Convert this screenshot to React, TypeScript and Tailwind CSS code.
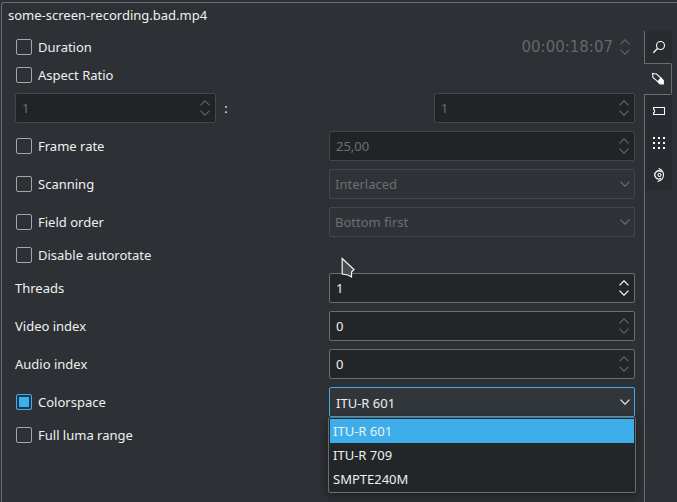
import { useState, type ReactNode } from "react";

type TabId = "file" | "edit" | "markers" | "metadata" | "analysis";

function SpinArrows({ bright = false, label }: { bright?: boolean; label: string }) {
  return (
    <span className={`flex w-5 shrink-0 flex-col items-center justify-center ${bright ? "text-[#fcfcfc]" : "text-[#5f6366]"}`}>
      <button type="button" aria-label={`Increase ${label}`} className="flex h-2.5 items-center">
        <svg width="10" height="6" viewBox="0 0 10 6" fill="none" stroke="currentColor" strokeWidth="1.2">
          <path d="M0.5 5.3 5 0.8l4.5 4.5" />
        </svg>
      </button>
      <button type="button" aria-label={`Decrease ${label}`} className="flex h-2.5 items-center">
        <svg width="10" height="6" viewBox="0 0 10 6" fill="none" stroke="currentColor" strokeWidth="1.2">
          <path d="M0.5 0.7 5 5.2 9.5 0.7" />
        </svg>
      </button>
    </span>
  );
}

function SpinBox({ label, value, disabled = false, bright = false, id }: { label: string; value: string; disabled?: boolean; bright?: boolean; id?: string }) {
  return (
    <div className={`flex h-[30px] min-w-0 rounded-[2px] border ${disabled ? "border-[#43474a] bg-[#212427]" : "border-[#6a6e71] bg-[#222629]"}`}>
      <input
        id={id}
        aria-label={id ? undefined : label}
        defaultValue={value}
        disabled={disabled}
        className={`min-w-0 flex-1 bg-transparent pl-1.5 leading-6 outline-none ${disabled ? "text-[#6b6f72]" : "text-[#eff0f1]"}`}
      />
      <SpinArrows bright={bright} label={label} />
    </div>
  );
}

function Chevron() {
  return (
    <svg className="pointer-events-none absolute top-3 right-[5px]" width="10" height="6" viewBox="0 0 10 6" fill="none" stroke="currentColor" strokeWidth="1.2">
      <path d="M0.5 0.7 5 5.2 9.5 0.7" />
    </svg>
  );
}

function DisabledSelect({ label, value }: { label: string; value: string }) {
  return (
    <div className="relative text-[#6b6f72]">
      <select disabled aria-label={label} className="block h-[30px] w-full appearance-none rounded-[2px] border border-[#43474a] bg-[#2f3337] px-[5px] opacity-100">
        <option>{value}</option>
      </select>
      <Chevron />
    </div>
  );
}

function Check({ label, defaultChecked = false }: { label: string; defaultChecked?: boolean }) {
  return (
    <label className="flex h-5 items-center gap-1.5 pl-px">
      <input
        type="checkbox"
        defaultChecked={defaultChecked}
        className="size-4 appearance-none rounded-[2px] border border-[#a4a7a9] checked:border-[#3daee9] checked:bg-[#3daee9] checked:shadow-[inset_0_0_0_2px_#20394a]"
      />
      {label}
    </label>
  );
}

function Row({ children }: { children: ReactNode }) {
  return <div className="grid grid-cols-2 items-center gap-2">{children}</div>;
}

const COLORSPACES = ["ITU-R 601", "ITU-R 709", "SMPTE240M"];

function ColorspaceSelect() {
  const [value, setValue] = useState(COLORSPACES[0]);
  return (
    <div className="relative">
      <select
        aria-label="Colorspace"
        value={value}
        onChange={(e) => setValue(e.target.value)}
        className="block h-[30px] w-full appearance-none rounded-[2px] border border-[#3daee9] bg-[#31363a] px-1.5 pt-0.5 outline-none"
      >
        {COLORSPACES.map((c) => (
          <option key={c}>{c}</option>
        ))}
      </select>
      <Chevron />
      <ul role="listbox" aria-label="Colorspace options" className="absolute -inset-x-px top-full z-10 rounded-[2px] border border-[#6a6e71] bg-[#222629] p-px shadow-[0_2px_8px_rgba(0,0,0,0.4)]">
        {COLORSPACES.map((c) => (
          <li
            key={c}
            role="option"
            aria-selected={c === value}
            onClick={() => setValue(c)}
            className={`h-6 px-[3px] ${c === value ? "bg-[#3daee9]" : ""}`}
          >
            {c}
          </li>
        ))}
      </ul>
    </div>
  );
}

const TABS: { id: TabId; label: string; icon: ReactNode }[] = [
  {
    id: "file",
    label: "File info",
    icon: (
      <g fill="none" stroke="currentColor">
        <circle cx="9.5" cy="6.5" r="4" strokeWidth="1.1" />
        <path d="M6.7 9.3 2.3 13.7" strokeWidth="1.3" />
      </g>
    ),
  },
  {
    id: "edit",
    label: "Properties",
    icon: (
      <g stroke="currentColor">
        <path d="M2.5 2.5 6.5 3 11 7 8 10.8 3 6.5Z" fill="none" strokeWidth="1.1" />
        <path d="M11 7.2 13.3 9.5v3.3H10L8 10.8Z" fill="currentColor" strokeWidth="1.2" />
      </g>
    ),
  },
  {
    id: "markers",
    label: "Markers",
    icon: <path d="M2.5 4.5h11v7h-11v-1.5l1-1v-2l-1-1Z" fill="none" stroke="currentColor" strokeWidth="1.1" />,
  },
  {
    id: "metadata",
    label: "Metadata",
    icon: <path d="M2 2h2v2H2zM7 2h2v2H7zM12 2h2v2h-2zM2 7h2v2H2zM7 7h2v2H7zM12 7h2v2h-2zM2 12h2v2H2zM7 12h2v2H7zM12 12h2v2h-2z" fill="currentColor" />,
  },
  {
    id: "analysis",
    label: "Analysis",
    icon: (
      <g fill="none" stroke="currentColor">
        <path d="M7.5 1.5C10.500 2.5 12.500 5 12.500 8S10.500 13.500 6.500 14.500" strokeWidth="1.1" />
        <path d="M10.500 5A4 4 0 1 0 10 11.300" strokeWidth="1.3" />
        <circle cx="8.5" cy="8" r="1.500" strokeWidth="1.2" />
      </g>
    ),
  },
];

function SideTabs() {
  const [active, setActive] = useState<TabId>("edit");
  return (
    <div role="tablist" aria-orientation="vertical" className="flex w-[33px] shrink-0 flex-col">
      {TABS.map((t) => (
        <button
          key={t.id}
          type="button"
          role="tab"
          aria-label={t.label}
          aria-selected={t.id === active}
          onClick={() => setActive(t.id)}
          className={`flex h-8 w-7 items-center justify-center border-[#6a6e71] text-[#fcfcfc] ${
            t.id === active ? "rounded-r-[2px] border-y border-r" : "border-l bg-[#282b2f]"
          }`}
        >
          <svg width="16" height="16" viewBox="0 0 16 16">
            {t.icon}
          </svg>
        </button>
      ))}
      <div className="flex-1 border-l border-[#6a6e71]" />
    </div>
  );
}

export default function App() {
  return (
    <div className="flex min-h-screen flex-col bg-[#2d3034] pt-0.5 pl-px font-['Noto_Sans',sans-serif] text-[13px] leading-6 text-[#eff0f1]">
      <div className="flex flex-1 flex-col rounded-tl-[3px] border-t border-l border-[#6a6e71]">
        <h1 className="h-7 pl-1.5">some-screen-recording.bad.mp4</h1>
        <div className="flex flex-1">
          <form className="flex min-w-0 flex-1 flex-col gap-2 pt-1.5 pr-[9px] pl-[13px]">
            <div className="flex h-5 items-center justify-between">
              <Check label="Duration" />
              <div className="flex items-center text-[#64686b]">
                <input aria-label="Duration timecode" disabled defaultValue="00:00:18:07" className="w-[102px] bg-transparent pr-0.5 text-right font-['DejaVu_Sans',sans-serif] text-[15px]" />
                <SpinArrows label="duration" />
              </div>
            </div>
            <Check label="Aspect Ratio" />
            <div className="grid grid-cols-3 items-center gap-2">
              <SpinBox label="Aspect ratio width" value="1" disabled />
              <span>:</span>
              <SpinBox label="Aspect ratio height" value="1" disabled />
            </div>
            <Row>
              <Check label="Frame rate" />
              <SpinBox label="Frame rate value" value="25,00" disabled />
            </Row>
            <Row>
              <Check label="Scanning" />
              <DisabledSelect label="Scanning mode" value="Interlaced" />
            </Row>
            <Row>
              <Check label="Field order" />
              <DisabledSelect label="Field order mode" value="Bottom first" />
            </Row>
            <div className="relative">
              <Check label="Disable autorotate" />
              <svg className="pointer-events-none absolute top-3 left-[52.5%] z-10" width="14" height="22" viewBox="0 0 14 22">
                <path d="M1.2 1.5 13 12.5 10.5 15V20L7 18 1.2 17Z" fill="#4a4a4a" stroke="#f4f4f4" strokeWidth="1.2" />
              </svg>
            </div>
            <Row>
              <label htmlFor="threads">Threads</label>
              <SpinBox id="threads" label="threads" value="1" bright />
            </Row>
            <Row>
              <label htmlFor="video-index">Video index</label>
              <SpinBox id="video-index" label="video index" value="0" />
            </Row>
            <Row>
              <label htmlFor="audio-index">Audio index</label>
              <SpinBox id="audio-index" label="audio index" value="0" />
            </Row>
            <Row>
              <Check label="Colorspace" defaultChecked />
              <ColorspaceSelect />
            </Row>
            <Check label="Full luma range" />
          </form>
          <SideTabs />
        </div>
      </div>
    </div>
  );
}
